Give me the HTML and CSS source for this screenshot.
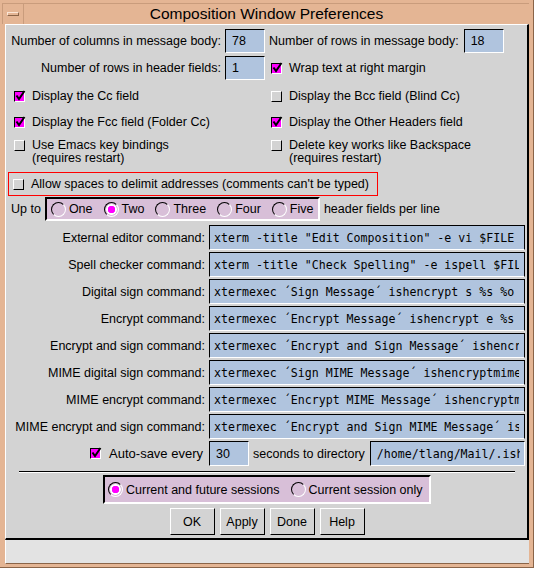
FILE: index.html
```html
<!DOCTYPE html>
<html>
<head>
<meta charset="utf-8">
<link rel="stylesheet" href="styles.css">
</head>
<body>
<div class="frame">
  <div class="titlebar">
    <div class="menubtn"><span class="bar"></span></div>
    <div class="title">Composition Window Preferences</div>
  </div>
  <div class="panel">
    <div class="row-top">
      <span class="lbl-a">Number of columns in message body:</span>
      <div class="field num">78</div>
      <span class="lbl-b">Number of rows in message body:</span>
      <div class="field num">18</div>
    </div>
    <div class="row-top r2">
      <span class="lbl-a">Number of rows in header fields:</span>
      <div class="field num">1</div>
      <span class="cbl wrap"><span class="cb on"><svg viewBox="0 0 10 10" width="10" height="10"><path d="M1.5 4.5 L4 8 L9.5 0" /></svg></span>Wrap text at right margin</span>
    </div>
    <div class="cbgrid">
      <span class="cbl"><span class="cb on"><svg viewBox="0 0 10 10" width="10" height="10"><path d="M1.5 4.5 L4 8 L9.5 0" /></svg></span>Display the Cc field</span>
      <span class="cbl"><span class="cb"></span>Display the Bcc field (Blind Cc)</span>
      <span class="cbl"><span class="cb on"><svg viewBox="0 0 10 10" width="10" height="10"><path d="M1.5 4.5 L4 8 L9.5 0" /></svg></span>Display the Fcc field (Folder Cc)</span>
      <span class="cbl"><span class="cb on"><svg viewBox="0 0 10 10" width="10" height="10"><path d="M1.5 4.5 L4 8 L9.5 0" /></svg></span>Display the Other Headers field</span>
      <span class="cbl two"><span class="cb"></span><span>Use Emacs key bindings<br>(requires restart)</span></span>
      <span class="cbl two"><span class="cb"></span><span>Delete key works like Backspace<br>(requires restart)</span></span>
    </div>
    <div class="redbox"><span class="cbl"><span class="cb"></span>Allow spaces to delimit addresses (comments can't be typed)</span></div>
    <div class="uprow">
      <span>Up to</span>
      <div class="rgroup">
        <span class="ropt"><span class="radio"></span>One</span>
        <span class="ropt"><span class="radio on"></span>Two</span>
        <span class="ropt"><span class="radio"></span>Three</span>
        <span class="ropt"><span class="radio"></span>Four</span>
        <span class="ropt"><span class="radio"></span>Five</span>
      </div>
      <span class="after">header fields per line</span>
    </div>
    <div class="cmds">
      <span class="clbl">External editor command:</span>
      <div class="cfield"><span class="clip">xterm -title "Edit Composition" -e vi $FILE</span></div>
      <span class="clbl">Spell checker command:</span>
      <div class="cfield"><span class="clip">xterm -title "Check Spelling" -e ispell $FILE</span></div>
      <span class="clbl">Digital sign command:</span>
      <div class="cfield"><span class="clip">xtermexec ´Sign Message´ ishencrypt s %s %o</span></div>
      <span class="clbl">Encrypt command:</span>
      <div class="cfield"><span class="clip">xtermexec ´Encrypt Message´ ishencrypt e %s %o</span></div>
      <span class="clbl">Encrypt and sign command:</span>
      <div class="cfield"><span class="clip">xtermexec ´Encrypt and Sign Message´ ishencrypt es %s %o</span></div>
      <span class="clbl">MIME digital sign command:</span>
      <div class="cfield"><span class="clip">xtermexec ´Sign MIME Message´ ishencryptmime s %s %o</span></div>
      <span class="clbl">MIME encrypt command:</span>
      <div class="cfield"><span class="clip">xtermexec ´Encrypt MIME Message´ ishencryptmime e %s %o</span></div>
      <span class="clbl">MIME encrypt and sign command:</span>
      <div class="cfield"><span class="clip">xtermexec ´Encrypt and Sign MIME Message´ ishencryptmime es %s %o</span></div>
      <span class="clbl autos"><span class="cb on"><svg viewBox="0 0 10 10" width="10" height="10"><path d="M1.5 4.5 L4 8 L9.5 0" /></svg></span>Auto-save every</span>
      <div class="autorow">
        <div class="field num">30</div>
        <span class="secs">seconds to directory</span>
        <div class="field dir"><span class="clip">/home/tlang/Mail/.ishmail</span></div>
      </div>
    </div>
    <div class="sep"></div>
    <div class="sessrow">
      <div class="sess">
        <span class="ropt"><span class="radio on"></span>Current and future sessions</span>
        <span class="ropt"><span class="radio"></span>Current session only</span>
      </div>
    </div>
    <div class="btns">
      <span class="btn">OK</span>
      <span class="btn">Apply</span>
      <span class="btn">Done</span>
      <span class="btn">Help</span>
    </div>
  </div>
  <div class="status"></div>
</div>
</body>
</html>
```
FILE: styles.css
```css
html, body {
  margin: 0;
  padding: 0;
}
body {
  font-family: "Liberation Sans", Arial, sans-serif;
  font-size: 12.5px;
  color: #000;
  background: #e4b594;
}
.frame {
  width: 534px;
  height: 568px;
  box-sizing: border-box;
  background: #e4b594;
  padding: 3px 4px 3px 5px;
  border-right: 1px solid #8a6448;
  border-bottom: 1px solid #8a6448;
  display: flex;
  flex-direction: column;
}
.titlebar {
  height: 21px;
  display: flex;
  align-items: stretch;
  border-top: 1px solid #c99c7c;
  margin-left: -3px;
  border-left: 1px solid #c99c7c;
  box-sizing: border-box;
}
.menubtn {
  width: 20px;
  border-right: 1px solid #c99c7c;
  display: flex;
  align-items: center;
  justify-content: center;
}
.bar {
  width: 10px;
  height: 2px;
  border-top: 1px solid #fbe6d6;
  border-left: 1px solid #fbe6d6;
  border-bottom: 1px solid #8a6448;
  border-right: 1px solid #8a6448;
}
.title {
  flex: 1;
  text-align: center;
  font-size: 15.5px;
  line-height: 20px;
  padding-right: 20px;
}
.panel {
  flex: 1;
  background: #d3d3d3;
  border-top: 1px solid #fff;
  border-left: 1px solid #fff;
  border-right: 2px solid #000;
  border-bottom: 2px solid #000;
  padding: 4px 0 0 1px;
  display: flex;
  flex-direction: column;
}
.status {
  height: 23px;
  background: #e3e3e3;
  border-left: 1px solid #fff;
  border-bottom: 1px solid #8a6448;
}
.row-top {
  display: flex;
  align-items: center;
  height: 24px;
}
.r2 {
  margin-top: 3px;
}
.lbl-a {
  width: 214px;
  text-align: right;
  margin-right: 4px;
}
.lbl-b {
  margin: 0 5px 0 4px;
}
.field {
  box-sizing: border-box;
  height: 24px;
  background: #b0c4de;
  border-top: 1px solid #000;
  border-left: 1px solid #000;
  border-bottom: 1px solid #fff;
  border-right: 1px solid #fff;
  display: flex;
  align-items: center;
  padding-left: 6px;
}
.num {
  width: 40px;
}
.cbl {
  display: flex;
  align-items: center;
  gap: 7px;
  white-space: nowrap;
}
.wrap {
  margin-left: 6px;
}
.cb {
  width: 11px;
  height: 11px;
  box-sizing: border-box;
  flex: none;
  border-top: 1px solid #fff;
  border-left: 1px solid #fff;
  border-bottom: 1px solid #000;
  border-right: 1px solid #000;
  background: #d3d3d3;
  position: relative;
}
.cb.on {
  background: #ff00ff;
  border-color: #000 #fff #fff #000;
}
.cb svg {
  position: absolute;
  left: 0;
  top: -1px;
  overflow: visible;
}
.cb svg path {
  fill: none;
  stroke: #000;
  stroke-width: 2;
}
.cbgrid {
  display: grid;
  grid-template-columns: 257px 1fr;
  grid-template-rows: 26px 26px 31px;
  padding-left: 7px;
  margin-top: 3px;
  align-items: center;
}
.cbl.two {
  align-self: start;
  align-items: flex-start;
  line-height: 13px;
  padding-top: 4px;
}
.cbl.two .cb {
  margin-top: 1px;
}
.redbox {
  margin: 6px 0 0 1px;
  width: 370px;
  height: 24px;
  box-sizing: border-box;
  border: 1px solid #ff0000;
  display: flex;
  align-items: center;
  padding-left: 4px;
}
.uprow {
  margin-top: 1px;
  height: 24px;
  display: flex;
  align-items: center;
  padding-left: 4px;
}
.rgroup {
  margin-left: 4px;
  width: 275px;
  height: 24px;
  box-sizing: border-box;
  background: #d8bfd8;
  border-top: 2px solid #000;
  border-left: 2px solid #000;
  border-bottom: 2px solid #fff;
  border-right: 2px solid #fff;
  display: flex;
  align-items: center;
  padding-left: 4px;
  gap: 11px;
}
.after {
  margin-left: 4px;
}
.ropt {
  display: flex;
  align-items: center;
  gap: 3px;
  white-space: nowrap;
}
.radio {
  width: 15px;
  height: 15px;
  box-sizing: border-box;
  border-radius: 50%;
  border: 1px solid;
  border-color: #000 #fff #fff #000;
  flex: none;
}
.radio.on {
  background: radial-gradient(circle, #ff00ff 0, #ff00ff 3.5px, #fff 4px, #fff 5px, transparent 5.6px);
}
.cmds {
  margin-top: 4px;
  display: grid;
  grid-template-columns: 198px 1fr;
  column-gap: 4px;
  row-gap: 2px;
  grid-auto-rows: 25px;
  padding-right: 2px;
}
.clbl {
  text-align: right;
  align-self: center;
  white-space: nowrap;
}
.cfield {
  box-sizing: border-box;
  background: #b0c4de;
  border-top: 1px solid #000;
  border-left: 1px solid #000;
  border-right: 1px solid #000;
  border-bottom: 1px solid #fff;
  display: flex;
  align-items: center;
  padding: 0 5px 0 4px;
  min-width: 0;
}
.clip {
  flex: 1;
  overflow: hidden;
  white-space: pre;
  font-family: "DejaVu Sans Mono", "Liberation Mono", monospace;
  font-size: 11.6px;
}
.autos {
  display: flex;
  justify-content: flex-end;
  align-items: center;
  gap: 8px;
  padding-right: 2px;
  font-size: 13px;
}
.autorow {
  display: flex;
  align-items: center;
  min-width: 0;
}
.autorow .field {
  height: 25px;
}
.secs {
  margin: 0 5px 0 4px;
  white-space: nowrap;
}
.dir {
  flex: 1;
  min-width: 0;
  padding: 0 4px 0 6px;
}
.sep {
  margin: 5px 12px 0 12px;
  border-top: 1px solid #000;
  border-bottom: 1px solid #fff;
}
.sessrow {
  display: flex;
  justify-content: center;
  margin-top: 2px;
}
.sess {
  width: 328px;
  height: 29px;
  box-sizing: border-box;
  background: #d8bfd8;
  border-top: 2px solid #000;
  border-left: 2px solid #000;
  border-bottom: 2px solid #fff;
  border-right: 2px solid #fff;
  display: flex;
  align-items: center;
  padding-left: 3px;
  gap: 11px;
}
.btns {
  display: flex;
  justify-content: center;
  gap: 5px;
  margin-top: 4px;
}
.btn {
  width: 45px;
  height: 27px;
  box-sizing: border-box;
  border-top: 1px solid #fff;
  border-left: 1px solid #fff;
  border-bottom: 1px solid #000;
  border-right: 1px solid #000;
  display: flex;
  align-items: center;
  justify-content: center;
}
```
